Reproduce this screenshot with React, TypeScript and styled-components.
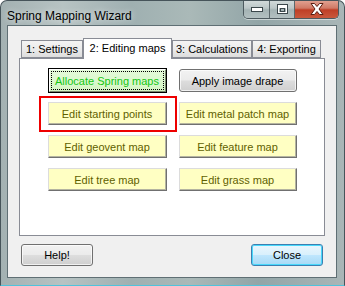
import React from 'react'
import styled, { createGlobalStyle } from 'styled-components'

const GlobalStyle = createGlobalStyle`
  html, body {
    margin: 0;
    padding: 0;
    background: #ffffff;
  }
  body {
    font-family: 'Liberation Sans', Arial, sans-serif;
  }
`

const Window = styled.div`
  box-sizing: border-box;
  width: 345px;
  height: 286px;
  display: flex;
  flex-direction: column;
  border: 1px solid #46545a;
  border-bottom-color: #4fc3dc;
  border-radius: 7px 7px 0 0;
  background: linear-gradient(90deg, #a3b1b2 0%, #b7c3c3 18%, #9fb0b1 38%, #aab9b8 55%, #92a5a7 75%, #a9b6b7 100%);
  overflow: hidden;
`

const TitleBar = styled.div`
  height: 25px;
  display: flex;
  justify-content: space-between;
  align-items: flex-start;
  padding-left: 6px;
`

const Title = styled.div`
  font-size: 12px;
  line-height: 12px;
  margin-top: 9px;
  color: #000000;
  text-shadow: 0 0 6px rgba(255, 255, 255, 0.8);
`

const CaptionGroup = styled.div`
  display: flex;
  margin-top: -1px;
  margin-right: 5px;
  height: 18px;
  border: 1px solid #4d5a5f;
  border-top: none;
  border-radius: 0 0 5px 5px;
  overflow: hidden;
  box-shadow: 0 1px 0 rgba(255, 255, 255, 0.5);
`

const CaptionButton = styled.div<{ $close?: boolean; $w: number }>`
  width: ${(p) => p.$w}px;
  display: flex;
  align-items: center;
  justify-content: center;
  border-right: ${(p) => (p.$close ? 'none' : '1px solid #5b686c')};
  background: ${(p) =>
    p.$close
      ? 'linear-gradient(180deg, #e3a595 0%, #d07a66 45%, #bf3f26 55%, #c9583c 100%)'
      : 'linear-gradient(180deg, #d4dcdc 0%, #bcc7c8 45%, #a4b3b4 55%, #b3c0c1 100%)'};
`

const ClientArea = styled.div`
  flex: 1;
  margin: 1px 7px 7px 6px;
  background: #f0f0f0;
  border: 1px solid #5f6f74;
  display: flex;
  flex-direction: column;
  padding: 12px 11px 11px 11px;
`

const TabStrip = styled.div`
  display: flex;
  align-items: flex-end;
  height: 20px;
  padding-left: 2px;
  position: relative;
  z-index: 1;
`

const Tab = styled.div<{ $active?: boolean; $w: number }>`
  box-sizing: border-box;
  width: ${(p) => p.$w}px;
  flex: none;
  white-space: nowrap;
  height: ${(p) => (p.$active ? '21px' : '18px')};
  margin-bottom: ${(p) => (p.$active ? '-1px' : '0')};
  display: flex;
  align-items: center;
  justify-content: center;
  font-size: 11px;
  color: #000000;
  border: 1px solid #898c95;
  border-left-width: ${(p) => (p.$active ? '1px' : '1px')};
  border-bottom: ${(p) => (p.$active ? 'none' : '1px solid #898c95')};
  background: ${(p) => (p.$active ? '#ffffff' : 'linear-gradient(180deg, #f4f4f4 0%, #ebebeb 50%, #dddddd 100%)')};
  position: relative;
  z-index: ${(p) => (p.$active ? 2 : 1)};
  padding-bottom: ${(p) => (p.$active ? '3px' : '0')};
`

const Panel = styled.div`
  box-sizing: border-box;
  height: 178px;
  background: #ffffff;
  border: 1px solid #898c95;
  display: grid;
  grid-template-columns: 119px 118px;
  grid-auto-rows: 23px;
  column-gap: 12px;
  row-gap: 10px;
  justify-content: center;
  align-content: start;
  padding-top: 10px;
`

const Cell = styled.div`
  position: relative;
  display: flex;
`

const MapButton = styled.div<{ $tone: 'yellow' | 'grey' }>`
  flex: 1;
  box-sizing: border-box;
  height: 23px;
  display: flex;
  align-items: center;
  justify-content: center;
  font-size: 11px;
  color: ${(p) => (p.$tone === 'yellow' ? '#5f5f00' : '#000000')};
  background: ${(p) =>
    p.$tone === 'yellow'
      ? '#ffffc3'
      : 'linear-gradient(180deg, #f2f2f2 0%, #ebebeb 48%, #dddddd 52%, #cfcfcf 100%)'};
  border: 1px solid;
  border-color: ${(p) => (p.$tone === 'yellow' ? '#dcdcdc #707070 #707070 #dcdcdc' : '#707070')};
  border-radius: ${(p) => (p.$tone === 'yellow' ? '0' : '3px')};
  box-shadow: ${(p) => (p.$tone === 'yellow' ? 'inset -1px -1px 0 #b4b4a0' : 'inset 0 0 0 1px rgba(255,255,255,0.7)')};
`

const FocusButton = styled.div`
  flex: 1;
  box-sizing: border-box;
  border: 1px solid #000000;
  margin: -1px 0 -1px 0;
  display: flex;
`

const FocusInner = styled.div`
  flex: 1;
  display: flex;
  align-items: center;
  justify-content: center;
  font-size: 11px;
  color: #13c613;
  background: linear-gradient(180deg, #e3fad8 0%, #d4f6c4 100%);
  border: 1px solid;
  border-color: #ffffff #7a8a70 #7a8a70 #ffffff;
  outline: 1px dotted #000000;
  outline-offset: -3px;
`

const Highlight = styled.div`
  position: absolute;
  left: -9px;
  top: -6px;
  right: -10px;
  bottom: -7px;
  border: 2px solid #ee0000;
  pointer-events: none;
`

const Footer = styled.div`
  display: flex;
  justify-content: space-between;
  margin-top: 8px;
  padding: 0 2px 0 2px;
`

const DialogButton = styled.div<{ $default?: boolean }>`
  box-sizing: border-box;
  width: 72px;
  height: 22px;
  display: flex;
  align-items: center;
  justify-content: center;
  font-size: 11px;
  color: #000000;
  border: 1px solid ${(p) => (p.$default ? '#3c7fb1' : '#707070')};
  border-radius: 3px;
  background: ${(p) =>
    p.$default
      ? 'linear-gradient(180deg, #eaf6fd 0%, #d9f0fc 48%, #bee6fd 52%, #a7d9f5 100%)'
      : 'linear-gradient(180deg, #f2f2f2 0%, #ebebeb 48%, #dddddd 52%, #cfcfcf 100%)'};
  box-shadow: ${(p) => (p.$default ? 'inset 0 0 0 1px #48d8fb' : 'inset 0 0 0 1px rgba(255,255,255,0.7)')};
`

const MinimizeIcon = () => (
  <svg width="12" height="6" viewBox="0 0 12 6">
    <rect x="0.5" y="1.5" width="11" height="4" fill="#ffffff" stroke="#3b474b" />
  </svg>
)

const MaximizeIcon = () => (
  <svg width="11" height="10" viewBox="0 0 11 10">
    <rect x="0.5" y="0.5" width="10" height="9" fill="none" stroke="#3b474b" />
    <rect x="1.5" y="1.5" width="8" height="7" fill="none" stroke="#ffffff" strokeWidth="1" />
    <rect x="2" y="2" width="7" height="2" fill="#ffffff" />
    <rect x="3.5" y="4.5" width="4" height="3" fill="none" stroke="#3b474b" />
  </svg>
)

const CloseIcon = () => (
  <svg width="14" height="12" viewBox="0 0 14 12">
    <path
      d="M1 0.5 H4.5 L7 3.5 L9.5 0.5 H13 L9 6 L13 11.5 H9.5 L7 8.5 L4.5 11.5 H1 L5 6 Z"
      fill="#ffffff"
      stroke="#5a1f12"
      strokeWidth="1"
      strokeLinejoin="round"
    />
  </svg>
)

const tabs = [
  { label: '1: Settings', w: 62 },
  { label: '2: Editing maps', w: 89, active: true },
  { label: '3: Calculations', w: 80 },
  { label: '4: Exporting', w: 69 },
]

const mapButtons = [
  'Edit starting points',
  'Edit metal patch map',
  'Edit geovent map',
  'Edit feature map',
  'Edit tree map',
  'Edit grass map',
]

const App: React.FC = () => {
  return (
    <>
      <GlobalStyle />
      <Window>
        <TitleBar>
          <Title>Spring Mapping Wizard</Title>
          <CaptionGroup>
            <CaptionButton $w={25}>
              <MinimizeIcon />
            </CaptionButton>
            <CaptionButton $w={24}>
              <MaximizeIcon />
            </CaptionButton>
            <CaptionButton $close $w={43}>
              <CloseIcon />
            </CaptionButton>
          </CaptionGroup>
        </TitleBar>
        <ClientArea>
          <TabStrip>
            {tabs.map((t) => (
              <Tab key={t.label} $w={t.w} $active={t.active}>
                {t.label}
              </Tab>
            ))}
          </TabStrip>
          <Panel>
            <Cell>
              <FocusButton>
                <FocusInner>Allocate Spring maps</FocusInner>
              </FocusButton>
            </Cell>
            <Cell>
              <MapButton $tone="grey">Apply image drape</MapButton>
            </Cell>
            {mapButtons.map((label, i) => (
              <Cell key={label}>
                <MapButton $tone="yellow">{label}</MapButton>
                {i === 0 && <Highlight />}
              </Cell>
            ))}
          </Panel>
          <Footer>
            <DialogButton>Help!</DialogButton>
            <DialogButton $default>Close</DialogButton>
          </Footer>
        </ClientArea>
      </Window>
    </>
  )
}

export default App
